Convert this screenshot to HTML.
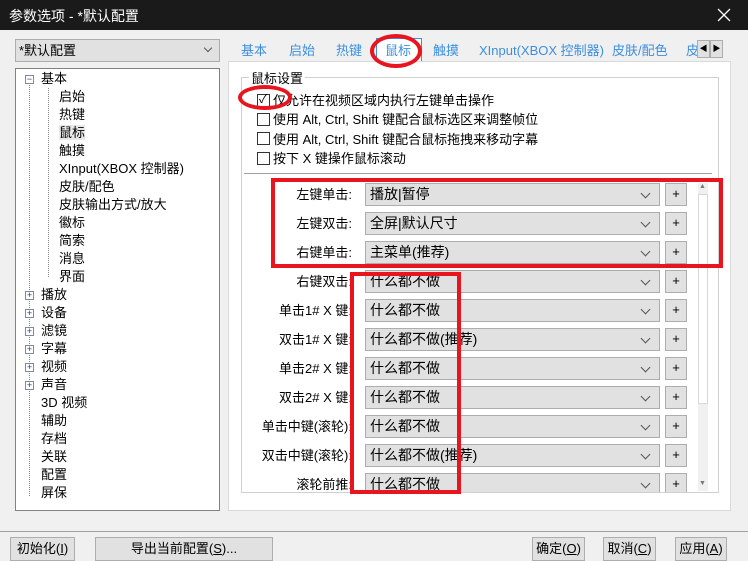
<!DOCTYPE html>
<html><head><meta charset="utf-8"><style>
*{margin:0;padding:0;box-sizing:border-box}
body{width:748px;height:558px;background:#f0f0f0;position:relative;overflow:hidden;font-family:"Liberation Sans","Noto Sans CJK SC",sans-serif;font-size:13px;color:#000}
.a{position:absolute;white-space:nowrap}
.t{line-height:18px}
.combo{position:absolute;left:365px;width:295px;height:23px;background:#e1e1e1;border:1px solid #adadad;padding-left:4px;line-height:21px;font-size:14px}
.combo:after{content:"";position:absolute;right:10px;top:6px;width:6px;height:6px;border-right:1px solid #555;border-bottom:1px solid #555;transform:rotate(45deg)}
.plus{position:absolute;left:665px;width:22px;height:23px;background:#e1e1e1;border:1px solid #adadad;text-align:center;line-height:20px;font-size:13px}
.lbl{position:absolute;right:396px;line-height:23px;font-size:13px}
.cb{position:absolute;left:257px;width:13px;height:13px;border:1px solid #333;background:#fff}
.pm{position:absolute;left:25px;width:9px;height:9px;border:1px solid #7a8ba8;background:#fff;font-size:9px;line-height:7px;text-align:center;color:#2a3d74}
.btn{position:absolute;top:537px;height:24px;background:#e1e1e1;border:1px solid #adadad;text-align:center;line-height:22px;font-size:13px}
.tab{position:absolute;top:40px;color:#3c8fdf;font-size:13px}
.red{position:absolute;border:4px solid #e8141e}
</style></head><body>
<div class="a" style="left:0;top:0;width:748px;height:30px;background:#1a1a1a"></div>
<div class="a" style="left:9px;top:6px;color:#fff;font-size:14px">参数选项 - *默认配置</div>
<svg class="a" style="left:717px;top:8px" width="14" height="14"><path d="M1 1L13 13M13 1L1 13" stroke="#fff" stroke-width="1.3"/></svg>

<div class="a" style="left:15px;top:39px;width:205px;height:23px;background:#e1e1e1;border:1px solid #adadad;padding-left:3px;line-height:21px;font-size:13px">*默认配置</div>
<div class="a" style="left:205px;top:45px;width:6px;height:6px;border-right:1px solid #555;border-bottom:1px solid #555;transform:rotate(45deg)"></div>

<div class="a" style="left:15px;top:68px;width:205px;height:443px;background:#fff;border:1px solid #828282"></div>
<div class="a" style="left:29px;top:80px;height:416px;border-left:1px dotted #888"></div>
<div class="a" style="left:48px;top:88px;height:189px;border-left:1px dotted #888"></div>
<div class="pm" style="top:75px">−</div>
<div class="a t" style="left:41px;top:70px">基本</div>
<div class="a t" style="left:59px;top:88px;line-height:18px">启始<br>热键<br><span style="background:#e8e8e8">鼠标</span><br>触摸<br>XInput(XBOX 控制器)<br>皮肤/配色<br>皮肤输出方式/放大<br>徽标<br>简索<br>消息<br>界面</div>
<div class="pm" style="top:291px">+</div><div class="pm" style="top:309px">+</div><div class="pm" style="top:327px">+</div><div class="pm" style="top:345px">+</div><div class="pm" style="top:363px">+</div><div class="pm" style="top:381px">+</div>
<div class="a t" style="left:41px;top:286px;line-height:18px">播放<br>设备<br>滤镜<br>字幕<br>视频<br>声音<br>3D 视频<br>辅助<br>存档<br>关联<br>配置<br>屏保</div>

<div class="tab" style="left:241px">基本</div><div class="tab" style="left:289px">启始</div><div class="tab" style="left:336px">热键</div>
<div class="a" style="left:376px;top:38px;width:46px;height:25px;border:1px solid #3c8fdf;border-bottom:none;background:#fff"></div>
<div class="tab" style="left:385px">鼠标</div><div class="tab" style="left:433px">触摸</div><div class="tab" style="left:479px">XInput(XBOX 控制器)</div><div class="tab" style="left:612px">皮肤/配色</div><div class="tab" style="left:686px">皮</div>
<div class="a" style="left:697px;top:40px;width:13px;height:18px;background:#e1e1e1;border:1px solid #adadad;font-size:8px;text-align:center;line-height:16px">◀</div>
<div class="a" style="left:710px;top:40px;width:13px;height:18px;background:#e1e1e1;border:1px solid #adadad;font-size:8px;text-align:center;line-height:16px">▶</div>

<div class="a" style="left:228px;top:61px;width:503px;height:450px;background:#fff;border:1px solid #d9d9d9"></div>
<div class="a" style="left:241px;top:77px;width:478px;height:416px;border:1px solid #d0d0d0"></div>
<div class="a" style="left:249px;top:68px;background:#fff;padding:0 2px;font-size:13px">鼠标设置</div>
<div class="cb" style="top:94px"></div><div class="a" style="left:259px;top:90px;font-size:12px">✓</div>
<div class="cb" style="top:113px"></div><div class="cb" style="top:132px"></div><div class="cb" style="top:152px"></div>
<div class="a" style="left:273px;top:91px;line-height:19.3px">仅允许在视频区域内执行左键单击操作<br>使用 Alt, Ctrl, Shift 键配合鼠标选区来调整帧位<br>使用 Alt, Ctrl, Shift 键配合鼠标拖拽来移动字幕<br>按下 X 键操作鼠标滚动</div>
<div class="a" style="left:244px;top:173px;width:468px;border-top:1px solid #a0a0a0"></div>

<div class="a" style="left:242px;top:178px;width:455px;height:314px;overflow:hidden">
<div style="position:relative;left:-242px;top:-178px;width:748px;height:558px">
<div class="lbl" style="top:183px">左键单击:</div><div class="combo" style="top:183px">播放|暂停</div><div class="plus" style="top:183px">+</div>
<div class="lbl" style="top:212px">左键双击:</div><div class="combo" style="top:212px">全屏|默认尺寸</div><div class="plus" style="top:212px">+</div>
<div class="lbl" style="top:241px">右键单击:</div><div class="combo" style="top:241px">主菜单(推荐)</div><div class="plus" style="top:241px">+</div>
<div class="lbl" style="top:270px">右键双击:</div><div class="combo" style="top:270px">什么都不做</div><div class="plus" style="top:270px">+</div>
<div class="lbl" style="top:299px">单击1# X 键:</div><div class="combo" style="top:299px">什么都不做</div><div class="plus" style="top:299px">+</div>
<div class="lbl" style="top:328px">双击1# X 键:</div><div class="combo" style="top:328px">什么都不做(推荐)</div><div class="plus" style="top:328px">+</div>
<div class="lbl" style="top:357px">单击2# X 键:</div><div class="combo" style="top:357px">什么都不做</div><div class="plus" style="top:357px">+</div>
<div class="lbl" style="top:386px">双击2# X 键:</div><div class="combo" style="top:386px">什么都不做</div><div class="plus" style="top:386px">+</div>
<div class="lbl" style="top:415px">单击中键(滚轮):</div><div class="combo" style="top:415px">什么都不做</div><div class="plus" style="top:415px">+</div>
<div class="lbl" style="top:444px">双击中键(滚轮):</div><div class="combo" style="top:444px">什么都不做(推荐)</div><div class="plus" style="top:444px">+</div>
<div class="lbl" style="top:473px">滚轮前推:</div><div class="combo" style="top:473px">什么都不做</div><div class="plus" style="top:473px">+</div>
</div></div>
<div class="a" style="left:698px;top:183px;width:10px;height:308px;background:#f0f0f0"></div>
<div class="a" style="left:698px;top:194px;width:10px;height:210px;background:#fff;border:1px solid #d8d8d8"></div>
<div class="a" style="left:699px;top:183px;font-size:7px;color:#777">▲</div>
<div class="a" style="left:699px;top:480px;font-size:7px;color:#777">▼</div>

<div class="red" style="left:271px;top:178px;width:452px;height:90px"></div>
<div class="red" style="left:350px;top:272px;width:111px;height:222px"></div>
<div class="a" style="left:370px;top:34px;width:52px;height:34px;border:4px solid #e8141e;border-radius:50%"></div>
<div class="a" style="left:238px;top:85px;width:54px;height:25px;border:4px solid #e8141e;border-radius:50%"></div>

<div class="a" style="left:0;top:531px;width:748px;border-top:1px solid #a0a0a0"></div>
<div class="btn" style="left:10px;width:65px">初始化(<u>I</u>)</div>
<div class="btn" style="left:95px;width:178px">导出当前配置(<u>S</u>)...</div>
<div class="btn" style="left:532px;width:53px">确定(<u>O</u>)</div>
<div class="btn" style="left:603px;width:53px">取消(<u>C</u>)</div>
<div class="btn" style="left:675px;width:52px">应用(<u>A</u>)</div>
</body></html>
